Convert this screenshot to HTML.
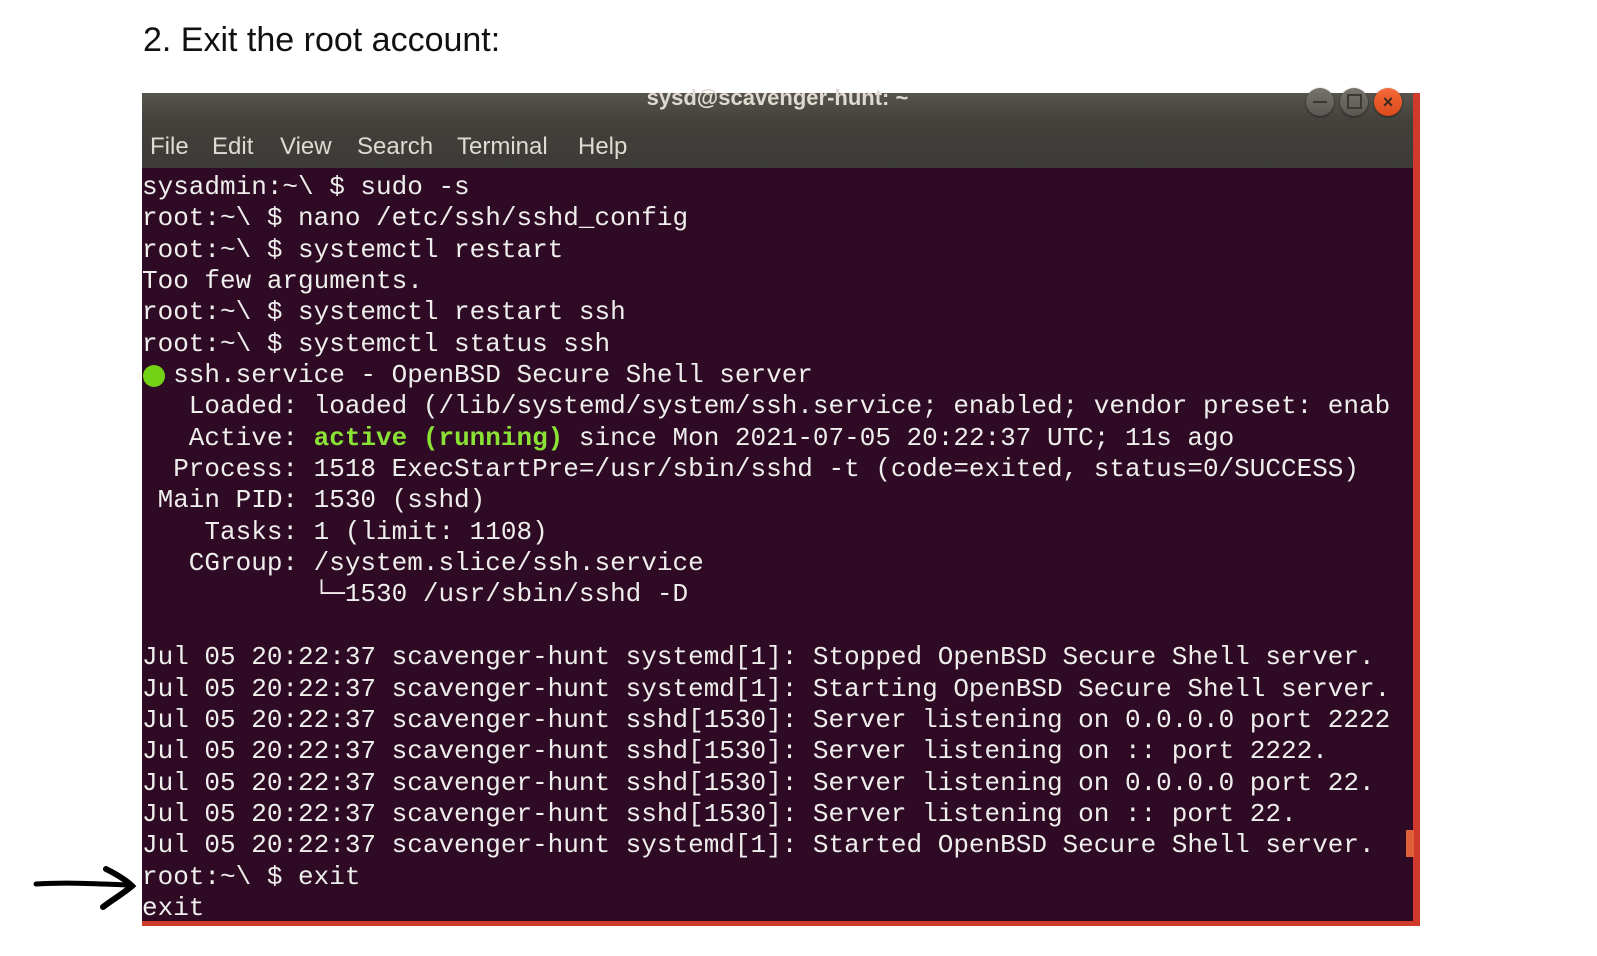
<!DOCTYPE html>
<html><head><meta charset="utf-8"><style>
html,body{margin:0;padding:0;background:#fff;width:1597px;height:956px;overflow:hidden;position:relative}
.h{position:absolute;left:143px;top:21px;font-family:"Liberation Sans",sans-serif;font-size:34px;color:#111}
.win{position:absolute;left:142px;top:93px;width:1278px;height:833px;background:#d03a2a}
.tb{position:absolute;left:0;top:0;width:1271px;height:75px;background:linear-gradient(#57544d,#42403b 40%,#3c3b37)}
.term{position:absolute;left:0;top:75px;width:1271px;height:753px;background:#2f0a24}
.title{position:absolute;left:0;width:1271px;top:-8px;text-align:center;font:bold 22px "Liberation Sans",sans-serif;color:#dfdbd2}
.menu span{position:absolute;top:40px;font:24px "Liberation Sans",sans-serif;color:#dfdbd2}
.btn{position:absolute;top:-5px;width:28px;height:28px;border-radius:50%;background:linear-gradient(#77746d,#5a5852);box-shadow:0 1px 2px #222}
pre{position:absolute;left:0;top:4px;margin:0;font-family:"Liberation Mono",monospace;font-size:26px;line-height:31.35px;color:#eeeeec;white-space:pre}
.g{color:#8ae234;font-weight:bold}
.dot{position:absolute;left:1px;top:197px;width:22px;height:22px;border-radius:50%;background:#73d216}
.cur{position:absolute;left:1264px;top:662px;width:8px;height:27px;background:#e0603a}
</style></head><body>
<div class="h">2. Exit the root account:</div>
<div class="win">
 <div class="tb">
  <div class="title">sysd@scavenger-hunt: ~</div>
  <div class="btn" style="left:1164px"><div style="position:absolute;left:7px;top:13px;width:14px;height:2px;background:#3a3935"></div></div>
  <div class="btn" style="left:1198px"><div style="position:absolute;left:7px;top:6px;width:11px;height:11px;border:2px solid #3a3935"></div></div>
  <div class="btn" style="left:1232px;background:linear-gradient(#f46a3a,#dc4a1a)"><div style="position:absolute;left:0;top:0;width:28px;text-align:center;font:bold 18px 'Liberation Sans',sans-serif;color:#3a2a20;line-height:28px">×</div></div>
  <div class="menu"><span style="left:8px">File</span><span style="left:70px">Edit</span><span style="left:138px">View</span><span style="left:215px">Search</span><span style="left:315px">Terminal</span><span style="left:436px">Help</span></div>
 </div>
 <div class="term">
<pre>sysadmin:~\ $ sudo -s
root:~\ $ nano /etc/ssh/sshd_config
root:~\ $ systemctl restart
Too few arguments.
root:~\ $ systemctl restart ssh
root:~\ $ systemctl status ssh
  ssh.service - OpenBSD Secure Shell server
   Loaded: loaded (/lib/systemd/system/ssh.service; enabled; vendor preset: enab
   Active: <span class="g">active (running)</span> since Mon 2021-07-05 20:22:37 UTC; 11s ago
  Process: 1518 ExecStartPre=/usr/sbin/sshd -t (code=exited, status=0/SUCCESS)
 Main PID: 1530 (sshd)
    Tasks: 1 (limit: 1108)
   CGroup: /system.slice/ssh.service
           └─1530 /usr/sbin/sshd -D

Jul 05 20:22:37 scavenger-hunt systemd[1]: Stopped OpenBSD Secure Shell server.
Jul 05 20:22:37 scavenger-hunt systemd[1]: Starting OpenBSD Secure Shell server.
Jul 05 20:22:37 scavenger-hunt sshd[1530]: Server listening on 0.0.0.0 port 2222
Jul 05 20:22:37 scavenger-hunt sshd[1530]: Server listening on :: port 2222.
Jul 05 20:22:37 scavenger-hunt sshd[1530]: Server listening on 0.0.0.0 port 22.
Jul 05 20:22:37 scavenger-hunt sshd[1530]: Server listening on :: port 22.
Jul 05 20:22:37 scavenger-hunt systemd[1]: Started OpenBSD Secure Shell server.
root:~\ $ exit
exit</pre>
  <div class="dot"></div>
  <div class="cur"></div>
 </div>
</div>
<svg style="position:absolute;left:0;top:0" width="160" height="956">
 <path d="M36 884 C70 882 100 884 130 885" stroke="#000" stroke-width="5" fill="none" stroke-linecap="round"/>
 <path d="M106 869 C116 874 126 880 132 886 C124 893 112 900 103 907" stroke="#000" stroke-width="6" fill="none" stroke-linecap="round"/>
</svg>
</body></html>
